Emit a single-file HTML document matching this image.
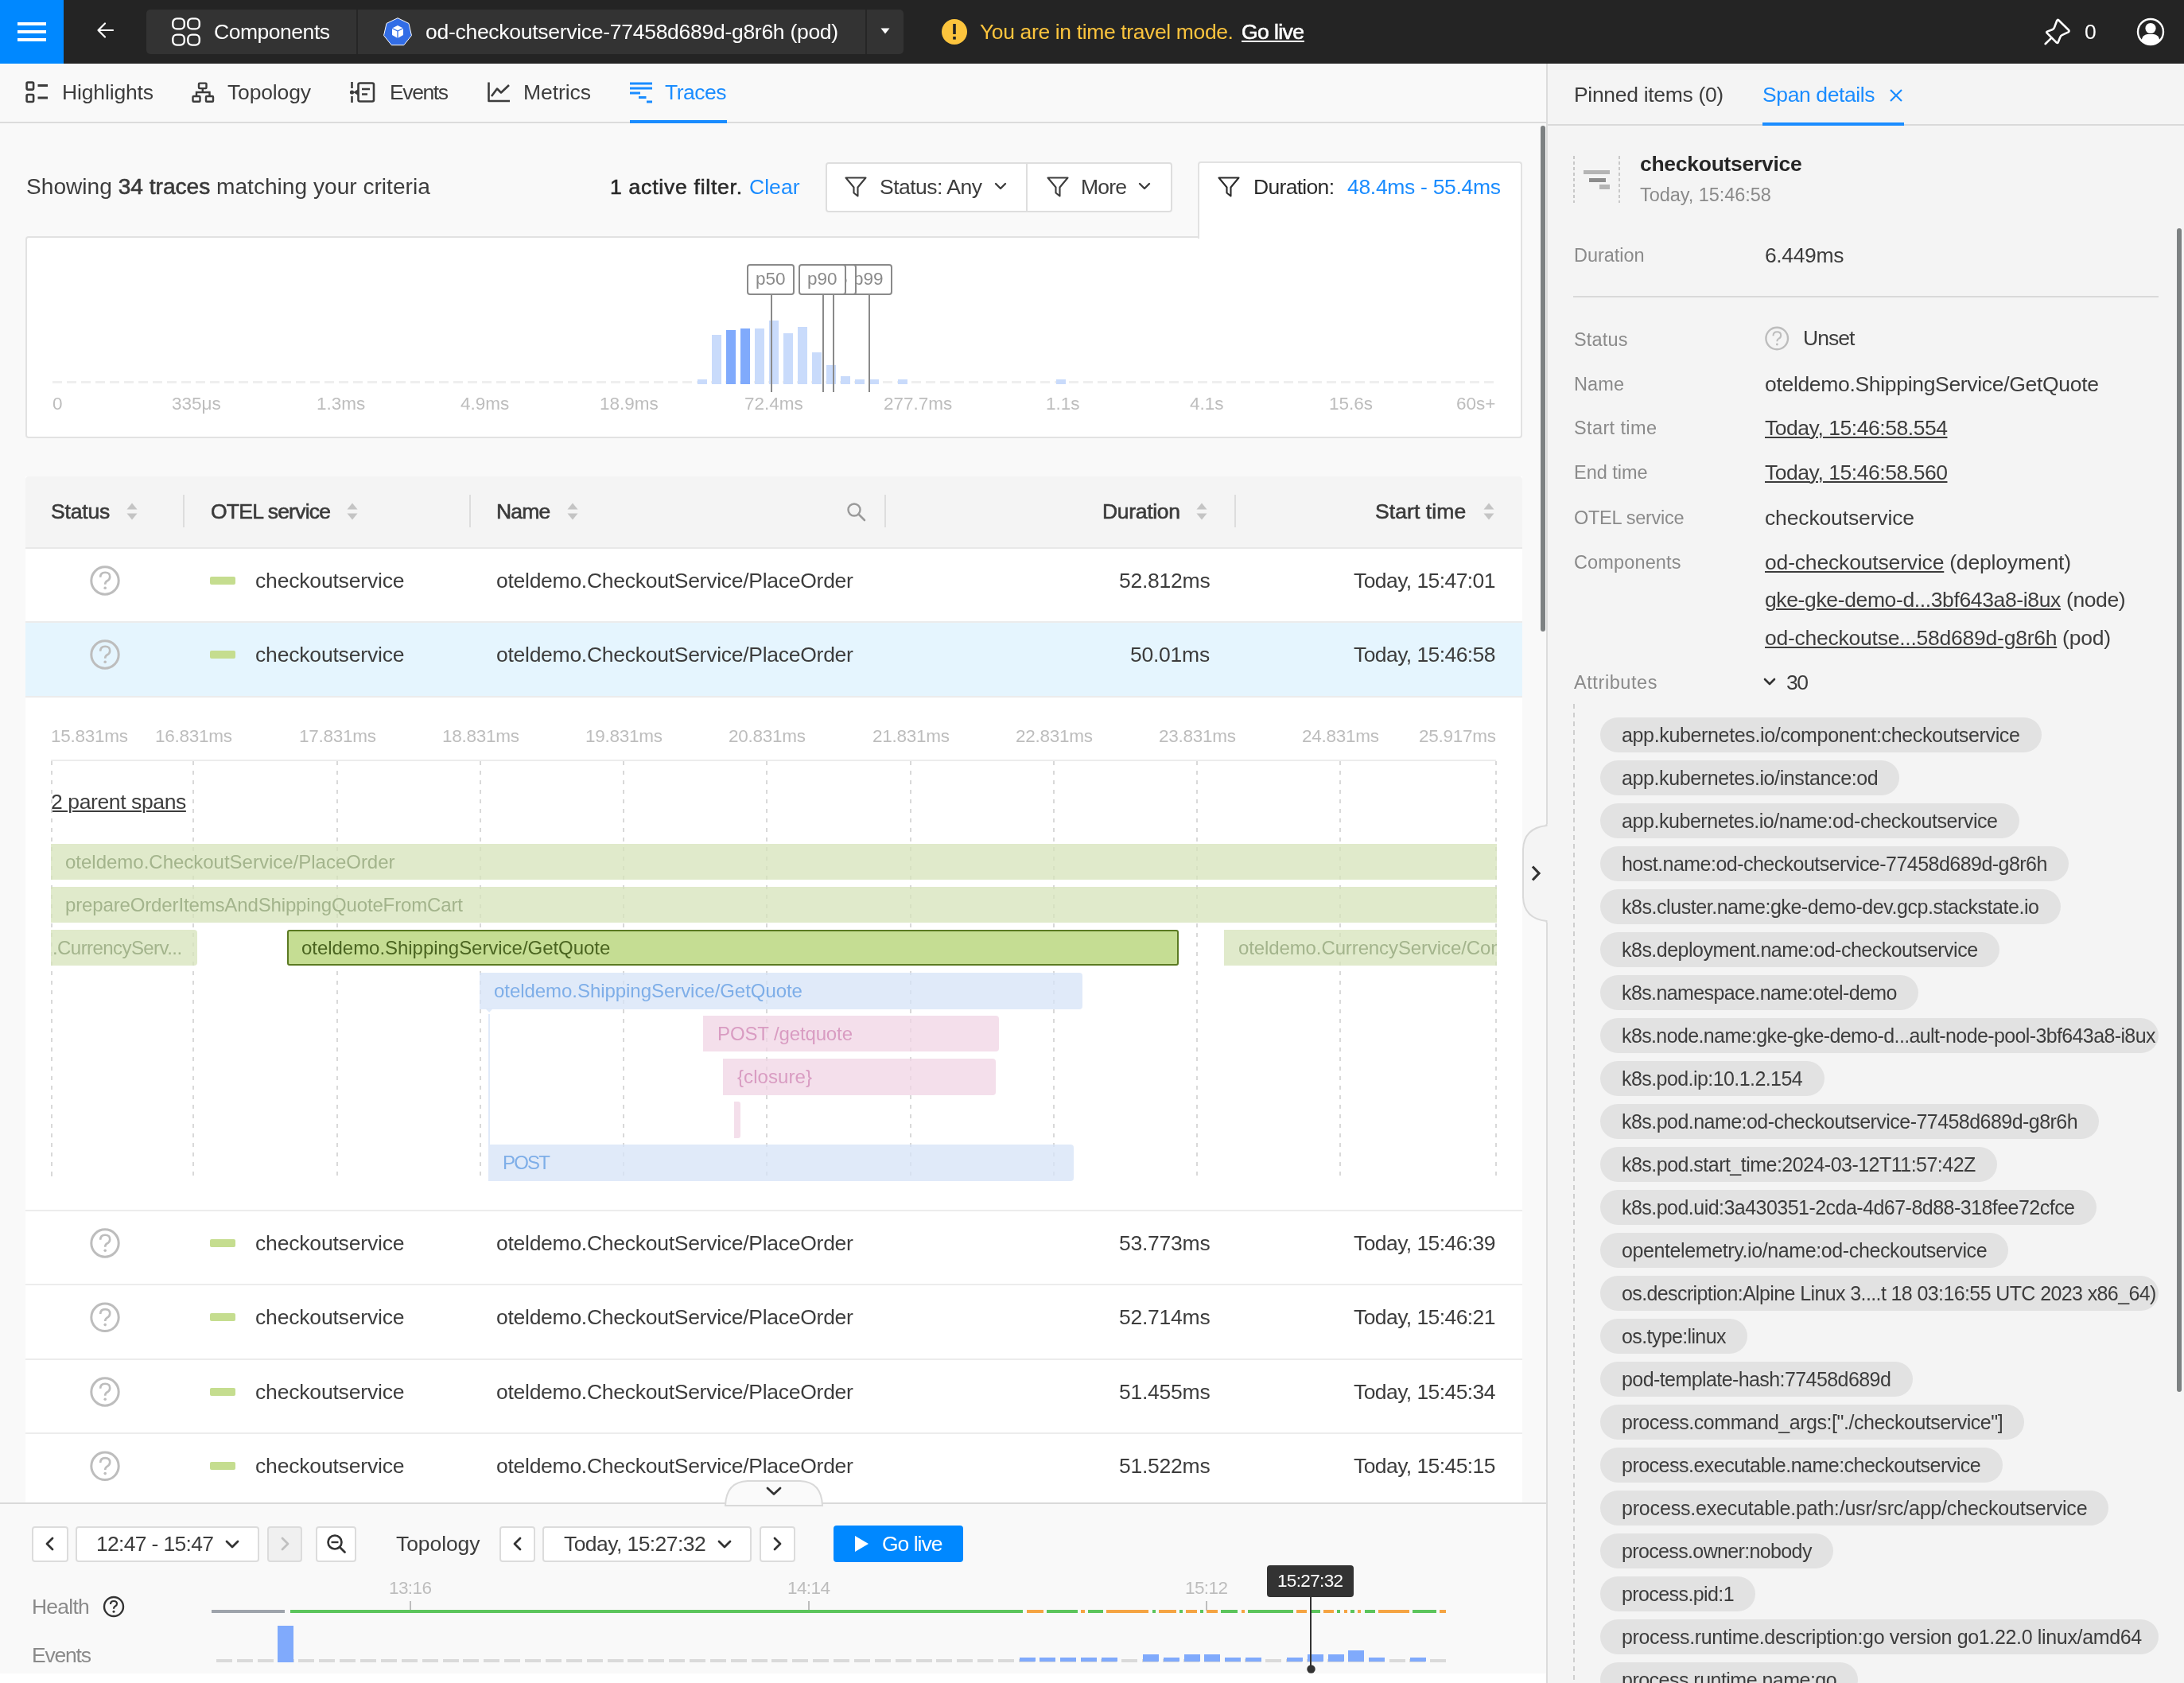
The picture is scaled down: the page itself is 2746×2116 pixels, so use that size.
<!DOCTYPE html><html><head><meta charset="utf-8"><title>Traces</title><style>
html,body{margin:0;padding:0;}
body{width:2746px;height:2116px;position:relative;overflow:hidden;background:#f9f9f9;font-family:"Liberation Sans",sans-serif;}
.a{position:absolute;}
.t{position:absolute;white-space:pre;will-change:transform;}
svg.a{overflow:visible;}
</style></head><body>
<div class="a" style="left:0.0px;top:0.0px;width:2746.0px;height:80.0px;background:#242424;"></div>
<div class="a" style="left:0.0px;top:0.0px;width:80.0px;height:80.0px;background:#0088ff;"></div>
<div class="a" style="left:22.0px;top:28.0px;width:36.0px;height:4.0px;background:#ffffff;"></div>
<div class="a" style="left:22.0px;top:38.0px;width:36.0px;height:4.0px;background:#ffffff;"></div>
<div class="a" style="left:22.0px;top:48.0px;width:36.0px;height:4.0px;background:#ffffff;"></div>
<svg class="a" style="left:118px;top:24px;" width="30" height="30" viewBox="0 0 30 30"><path d="M24 14 H6 M14 5.5 L5.5 14 L14 22.5" fill="none" stroke="#fff" stroke-width="2.2" stroke-linecap="round" stroke-linejoin="round"/></svg>
<div class="a" style="left:184.0px;top:12.0px;width:952.0px;height:56.0px;background:#333333;border-radius:5px;"></div>
<div class="a" style="left:448.0px;top:12.0px;width:2.0px;height:56.0px;background:#262626;"></div>
<div class="a" style="left:1088.0px;top:12.0px;width:2.0px;height:56.0px;background:#262626;"></div>
<svg class="a" style="left:214px;top:20px;" width="40" height="40" viewBox="0 0 40 40"><rect x="3.3" y="3.4" width="14.5" height="13" rx="5" fill="none" stroke="#fff" stroke-width="2.4"/><rect x="3.3" y="23.6" width="14.5" height="13" rx="5" fill="none" stroke="#fff" stroke-width="2.4"/><rect x="22.3" y="3.4" width="14.5" height="13" rx="5" fill="none" stroke="#fff" stroke-width="2.4"/><rect x="22.3" y="23.6" width="14.5" height="13" rx="5" fill="none" stroke="#fff" stroke-width="2.4"/></svg>
<div class="t" style="left:269.0px;top:20.0px;font-size:26.5px;line-height:40px;color:#ffffff;letter-spacing:-0.47px;">Components</div>
<svg class="a" style="left:480px;top:20px;" width="40" height="40" viewBox="0 0 40 40"><polygon points="20.00,2.70 33.99,9.44 37.45,24.58 27.77,36.73 12.23,36.73 2.55,24.58 6.01,9.44" fill="#326de6" stroke="#fff" stroke-width="1"/><path d="M20 12 L27 15.5 L27 24 L20 28 L13 24 L13 15.5 Z" fill="#fff"/><path d="M13 15.5 L20 19 L27 15.5 M20 19 V28" fill="none" stroke="#326de6" stroke-width="1.3"/></svg>
<div class="t" style="left:535.0px;top:20.0px;font-size:26.5px;line-height:40px;color:#ffffff;letter-spacing:-0.28px;">od-checkoutservice-77458d689d-g8r6h (pod)</div>
<svg class="a" style="left:1104px;top:34px;" width="18" height="10" viewBox="0 0 18 10"><path d="M3.5 1.5 H14.5 L9 8.5 Z" fill="#fff"/></svg>
<svg class="a" style="left:1183px;top:23px;" width="34" height="34" viewBox="0 0 34 34"><circle cx="17" cy="17" r="16" fill="#fcc43d"/><rect x="15.2" y="7" width="3.6" height="13" fill="#242424"/><rect x="15.2" y="23" width="3.6" height="3.6" fill="#242424"/></svg>
<div class="t" style="left:1232.0px;top:20.0px;font-size:26.5px;line-height:40px;color:#fcc43d;letter-spacing:-0.37px;">You are in time travel mode.</div>
<div class="t" style="left:1561.0px;top:20.0px;font-size:26.5px;line-height:40px;color:#ffffff;-webkit-text-stroke:0.6px #ffffff;letter-spacing:-0.58px;">Go live</div>
<div class="a" style="left:1561.0px;top:51.0px;width:79.0px;height:1.6px;background:#ffffff;"></div>
<svg class="a" style="left:2566px;top:20px;" width="40" height="40" viewBox="0 0 40 40"><g fill="none" stroke="#fff" stroke-width="2.6" stroke-linejoin="round" stroke-linecap="round"><path d="M22.2 5.2 L35.2 18 Q36.2 19.4 34.6 20.4 L26.6 24.2 Q25 25 24.4 26.6 L21.6 33.4 Q21 34.6 19.8 33.6 L7.6 21.4 Q6.6 20.2 8 19.6 L14.4 17.2 Q16.2 16.6 16.9 14.8 L20.2 6 Q21 4.2 22.2 5.2 Z"/><path d="M13.4 27.6 L5.6 35.2"/></g></svg>
<div class="t" style="left:2621.0px;top:20.0px;font-size:26.5px;line-height:40px;color:#ffffff;">0</div>
<svg class="a" style="left:2686px;top:22px;" width="36" height="36" viewBox="0 0 36 36"><circle cx="18" cy="18" r="16" fill="none" stroke="#fff" stroke-width="2.4"/><circle cx="18" cy="13.5" r="6.6" fill="#fff"/><path d="M6.5 28.5 Q8 21.5 14 21 L22 21 Q28 21.5 29.5 28.5 Q24.5 33.5 18 33.5 Q11.5 33.5 6.5 28.5 Z" fill="#fff"/></svg>
<div class="a" style="left:0.0px;top:153.0px;width:1944.0px;height:2.0px;background:#dcdcdc;"></div>
<svg class="a" style="left:30px;top:100px;" width="34" height="32" viewBox="0 0 34 32"><g fill="none" stroke="#3c3c3c" stroke-width="2.6"><rect x="3.6" y="3.6" width="8.5" height="9" rx="1.5"/><rect x="3.6" y="19" width="8.5" height="9" rx="1.5"/></g><rect x="17.5" y="6" width="12.5" height="3" fill="#3c3c3c"/><rect x="17.5" y="21.5" width="12.5" height="3" fill="#3c3c3c"/></svg>
<div class="t" style="left:77.5px;top:95.5px;font-size:26.5px;line-height:40px;color:#3c3c3c;letter-spacing:-0.15px;">Highlights</div>
<svg class="a" style="left:240px;top:100px;" width="32" height="32" viewBox="0 0 32 32"><g fill="none" stroke="#3c3c3c" stroke-width="2.4"><rect x="10" y="4.6" width="9.5" height="6.5" rx="1"/><rect x="2.5" y="21" width="9" height="6.8" rx="1"/><rect x="19" y="21" width="9" height="6.8" rx="1"/><path d="M14.8 11 V16 M7 21 V16 H23.5 V21"/></g></svg>
<div class="t" style="left:286.0px;top:95.5px;font-size:26.5px;line-height:40px;color:#3c3c3c;letter-spacing:-0.15px;">Topology</div>
<svg class="a" style="left:438px;top:100px;" width="36" height="32" viewBox="0 0 36 32"><g fill="none" stroke="#3c3c3c" stroke-width="2.6"><rect x="12.5" y="4.5" width="19.5" height="23" rx="2"/><path d="M4.5 3 V11 M4.5 21 V29"/><path d="M17 12 H27 M17 18.5 H24"/></g><circle cx="4.5" cy="16" r="2.6" fill="#3c3c3c"/><path d="M6 16 L12.5 12 V20 Z" fill="#3c3c3c"/></svg>
<div class="t" style="left:489.7px;top:95.5px;font-size:26.5px;line-height:40px;color:#3c3c3c;letter-spacing:-1.40px;">Events</div>
<svg class="a" style="left:611px;top:100px;" width="32" height="32" viewBox="0 0 32 32"><g fill="none" stroke="#3c3c3c" stroke-width="2.6" stroke-linejoin="round"><path d="M3.5 3.5 V27 H30"/><path d="M7 21 L14 11.5 L19 16.5 L29 7"/></g></svg>
<div class="t" style="left:658.0px;top:95.5px;font-size:26.5px;line-height:40px;color:#3c3c3c;letter-spacing:-0.07px;">Metrics</div>
<svg class="a" style="left:790px;top:100px;" width="32" height="32" viewBox="0 0 32 32"><g fill="#1a8cff"><rect x="2" y="3.5" width="28" height="3"/><rect x="2" y="9.5" width="28" height="3"/><rect x="2" y="15.5" width="13" height="3"/><rect x="13" y="21" width="9.5" height="3"/><rect x="23" y="26.5" width="7" height="3"/></g></svg>
<div class="t" style="left:836.0px;top:95.5px;font-size:26.5px;line-height:40px;color:#1a8cff;letter-spacing:-0.50px;">Traces</div>
<div class="a" style="left:792.0px;top:151.0px;width:122.0px;height:4.0px;background:#1a8cff;"></div>
<div class="t" style="left:33px;top:215px;font-size:28.12px;line-height:40px;color:#3c3c3c;">Showing <span style="-webkit-text-stroke:0.6px #3a3a3a;color:#3a3a3a">34 traces</span> matching your criteria</div>
<div class="t" style="left:767.0px;top:215.0px;font-size:26.5px;line-height:40px;color:#2a2a2a;-webkit-text-stroke:0.6px #2a2a2a;letter-spacing:0.76px;">1 active filter.</div>
<div class="t" style="left:941.5px;top:215.0px;font-size:26.5px;line-height:40px;color:#1a8cff;letter-spacing:0.04px;">Clear</div>
<div class="a" style="left:1038.0px;top:203.5px;width:436.0px;height:63.0px;background:#ffffff;box-sizing:border-box;border:2px solid #dedede;border-radius:4px;"></div>
<div class="a" style="left:1290.0px;top:205.0px;width:2.0px;height:60.0px;background:#dedede;"></div>
<svg class="a" style="left:1061px;top:220px;" width="30" height="30" viewBox="0 0 30 30"><path d="M2.5 3.5 H27.5 L17.5 15.5 V26.5 L12.5 22.5 V15.5 Z" fill="none" stroke="#3c3c3c" stroke-width="2.1" stroke-linejoin="round"/></svg>
<div class="t" style="left:1106.0px;top:215.0px;font-size:26.5px;line-height:40px;color:#3c3c3c;letter-spacing:-0.51px;">Status: Any</div>
<svg class="a" style="left:1249.5px;top:228.5px;" width="16" height="12" viewBox="0 0 16 12"><path d="M2 2 L8.0 8 L14 2" fill="none" stroke="#3c3c3c" stroke-width="2.4" stroke-linecap="round" stroke-linejoin="round"/></svg>
<svg class="a" style="left:1315px;top:220px;" width="30" height="30" viewBox="0 0 30 30"><path d="M2.5 3.5 H27.5 L17.5 15.5 V26.5 L12.5 22.5 V15.5 Z" fill="none" stroke="#3c3c3c" stroke-width="2.1" stroke-linejoin="round"/></svg>
<div class="t" style="left:1359.0px;top:215.0px;font-size:26.5px;line-height:40px;color:#3c3c3c;letter-spacing:-0.79px;">More</div>
<svg class="a" style="left:1431px;top:228.5px;" width="16" height="12" viewBox="0 0 16 12"><path d="M2 2 L8.0 8 L14 2" fill="none" stroke="#3c3c3c" stroke-width="2.4" stroke-linecap="round" stroke-linejoin="round"/></svg>
<div class="a" style="left:32.0px;top:297.0px;width:1882.0px;height:254.0px;background:#ffffff;box-sizing:border-box;border:2px solid #e2e2e2;border-radius:4px;"></div>
<div class="a" style="left:1506.0px;top:203.0px;width:408.0px;height:97.0px;background:#ffffff;box-sizing:border-box;border:2px solid #e2e2e2;border-bottom:none;border-radius:4px 4px 0 0;"></div>
<div class="a" style="left:1508.0px;top:296.0px;width:404.0px;height:5.0px;background:#ffffff;"></div>
<svg class="a" style="left:1530px;top:220px;" width="30" height="30" viewBox="0 0 30 30"><path d="M2.5 3.5 H27.5 L17.5 15.5 V26.5 L12.5 22.5 V15.5 Z" fill="none" stroke="#2a2a2a" stroke-width="2.1" stroke-linejoin="round"/></svg>
<div class="t" style="left:1575.5px;top:215.0px;font-size:26.5px;line-height:40px;color:#2a2a2a;letter-spacing:-0.69px;">Duration:</div>
<div class="t" style="left:1694.0px;top:215.0px;font-size:26.5px;line-height:40px;color:#1a8cff;letter-spacing:-0.31px;">48.4ms - 55.4ms</div>
<div class="a" style="left:66px;top:479px;width:1815px;height:3px;background:repeating-linear-gradient(90deg,#efefef 0 12px,transparent 12px 18px);"></div>
<div class="a" style="left:877.0px;top:477.0px;width:12.0px;height:5.6px;background:#c9dbfb;"></div>
<div class="a" style="left:895.0px;top:421.0px;width:12.0px;height:61.6px;background:#c9dbfb;"></div>
<div class="a" style="left:913.0px;top:415.0px;width:12.0px;height:67.6px;background:#80aafc;"></div>
<div class="a" style="left:931.0px;top:413.0px;width:12.0px;height:69.6px;background:#80aafc;"></div>
<div class="a" style="left:949.0px;top:413.0px;width:12.0px;height:69.6px;background:#c9dbfb;"></div>
<div class="a" style="left:967.0px;top:403.0px;width:12.0px;height:79.6px;background:#c9dbfb;"></div>
<div class="a" style="left:985.0px;top:419.0px;width:12.0px;height:63.6px;background:#c9dbfb;"></div>
<div class="a" style="left:1003.0px;top:411.0px;width:12.0px;height:71.6px;background:#c9dbfb;"></div>
<div class="a" style="left:1021.0px;top:443.0px;width:12.0px;height:39.6px;background:#c9dbfb;"></div>
<div class="a" style="left:1039.0px;top:459.0px;width:12.0px;height:23.6px;background:#c9dbfb;"></div>
<div class="a" style="left:1057.0px;top:473.0px;width:12.0px;height:9.6px;background:#c9dbfb;"></div>
<div class="a" style="left:1075.0px;top:477.0px;width:12.0px;height:5.6px;background:#c9dbfb;"></div>
<div class="a" style="left:1093.0px;top:477.0px;width:12.0px;height:5.6px;background:#c9dbfb;"></div>
<div class="a" style="left:1129.0px;top:477.0px;width:12.0px;height:5.6px;background:#c9dbfb;"></div>
<div class="a" style="left:1327.5px;top:477.0px;width:12.0px;height:5.6px;background:#c9dbfb;"></div>
<div class="t" style="left:66.0px;top:488.0px;font-size:22.5px;line-height:40px;color:#bdbdbd;">0</div>
<div class="t" style="left:216.1px;top:488.0px;font-size:22.5px;line-height:40px;color:#bdbdbd;">335μs</div>
<div class="t" style="left:398.2px;top:488.0px;font-size:22.5px;line-height:40px;color:#bdbdbd;">1.3ms</div>
<div class="t" style="left:579.2px;top:488.0px;font-size:22.5px;line-height:40px;color:#bdbdbd;">4.9ms</div>
<div class="t" style="left:754.0px;top:488.0px;font-size:22.5px;line-height:40px;color:#bdbdbd;">18.9ms</div>
<div class="t" style="left:936.3px;top:488.0px;font-size:22.5px;line-height:40px;color:#bdbdbd;">72.4ms</div>
<div class="t" style="left:1111.2px;top:488.0px;font-size:22.5px;line-height:40px;color:#bdbdbd;">277.7ms</div>
<div class="t" style="left:1315.3px;top:488.0px;font-size:22.5px;line-height:40px;color:#bdbdbd;">1.1s</div>
<div class="t" style="left:1496.4px;top:488.0px;font-size:22.5px;line-height:40px;color:#bdbdbd;">4.1s</div>
<div class="t" style="left:1671.3px;top:488.0px;font-size:22.5px;line-height:40px;color:#bdbdbd;">15.6s</div>
<div class="t" style="left:1830.6px;top:488.0px;font-size:22.5px;line-height:40px;color:#bdbdbd;">60s+</div>
<div class="a" style="left:1062.0px;top:331.5px;width:60.0px;height:39.0px;background:#ffffff;box-sizing:border-box;border:2px solid #8a8a8a;border-radius:4px;"></div>
<div class="t" style="left:1073.2px;top:331.0px;font-size:22.5px;line-height:40px;color:#8a8a8a;">p99</div>
<div class="a" style="left:1017.0px;top:331.5px;width:60.0px;height:39.0px;background:#ffffff;box-sizing:border-box;border:2px solid #8a8a8a;border-radius:4px;"></div>
<div class="t" style="left:1028.2px;top:331.0px;font-size:22.5px;line-height:40px;color:#8a8a8a;">p95</div>
<div class="a" style="left:1003.5px;top:331.5px;width:60.0px;height:39.0px;background:#ffffff;box-sizing:border-box;border:2px solid #8a8a8a;border-radius:4px;"></div>
<div class="t" style="left:1014.7px;top:331.0px;font-size:22.5px;line-height:40px;color:#8a8a8a;">p90</div>
<div class="a" style="left:938.5px;top:331.5px;width:60.0px;height:39.0px;background:#ffffff;box-sizing:border-box;border:2px solid #8a8a8a;border-radius:4px;"></div>
<div class="t" style="left:949.7px;top:331.0px;font-size:22.5px;line-height:40px;color:#8a8a8a;">p50</div>
<div class="a" style="left:1091.5px;top:370.5px;width:2.0px;height:122.0px;background:#8a8a8a;"></div>
<div class="a" style="left:1046.5px;top:370.5px;width:2.0px;height:122.0px;background:#8a8a8a;"></div>
<div class="a" style="left:1034.0px;top:370.5px;width:2.0px;height:122.0px;background:#8a8a8a;"></div>
<div class="a" style="left:969.0px;top:370.5px;width:2.0px;height:122.0px;background:#8a8a8a;"></div>
<div class="a" style="left:32.0px;top:599.0px;width:1882.0px;height:1290.0px;background:#ffffff;"></div>
<div class="a" style="left:32.0px;top:599.0px;width:1882.0px;height:90.0px;background:#f4f4f4;border-radius:4px 4px 0 0;"></div>
<div class="a" style="left:32.0px;top:688.0px;width:1882.0px;height:2.0px;background:#e8e8e8;"></div>
<div class="t" style="left:64.0px;top:623.0px;font-size:26.5px;line-height:40px;color:#3a3a3a;-webkit-text-stroke:0.6px #3a3a3a;letter-spacing:-0.17px;">Status</div>
<svg class="a" style="left:158px;top:630px;" width="17" height="26" viewBox="0 0 17 26"><path d="M1.5 10.5 L8 2.5 L14.5 10.5 Z M1.5 15.5 L8 23.5 L14.5 15.5 Z" fill="#c4c4c4"/></svg>
<div class="a" style="left:230.0px;top:622.0px;width:2.0px;height:41.0px;background:#dddddd;"></div>
<div class="t" style="left:264.6px;top:623.0px;font-size:26.5px;line-height:40px;color:#3a3a3a;-webkit-text-stroke:0.6px #3a3a3a;letter-spacing:-0.78px;">OTEL service</div>
<svg class="a" style="left:435px;top:630px;" width="17" height="26" viewBox="0 0 17 26"><path d="M1.5 10.5 L8 2.5 L14.5 10.5 Z M1.5 15.5 L8 23.5 L14.5 15.5 Z" fill="#c4c4c4"/></svg>
<div class="a" style="left:590.0px;top:622.0px;width:2.0px;height:41.0px;background:#dddddd;"></div>
<div class="t" style="left:624.0px;top:623.0px;font-size:26.5px;line-height:40px;color:#3a3a3a;-webkit-text-stroke:0.6px #3a3a3a;letter-spacing:-0.80px;">Name</div>
<svg class="a" style="left:712px;top:630px;" width="17" height="26" viewBox="0 0 17 26"><path d="M1.5 10.5 L8 2.5 L14.5 10.5 Z M1.5 15.5 L8 23.5 L14.5 15.5 Z" fill="#c4c4c4"/></svg>
<svg class="a" style="left:1064px;top:631px;" width="26" height="26" viewBox="0 0 26 26"><circle cx="10" cy="10" r="7.5" fill="none" stroke="#9a9a9a" stroke-width="2.4"/><path d="M15.5 15.5 L23 23" stroke="#9a9a9a" stroke-width="2.6" stroke-linecap="round"/></svg>
<div class="a" style="left:1112.0px;top:622.0px;width:2.0px;height:41.0px;background:#dddddd;"></div>
<div class="t" style="left:1385.5px;top:623.0px;font-size:26.5px;line-height:40px;color:#3a3a3a;-webkit-text-stroke:0.6px #3a3a3a;letter-spacing:-0.31px;">Duration</div>
<svg class="a" style="left:1502.5px;top:630px;" width="17" height="26" viewBox="0 0 17 26"><path d="M1.5 10.5 L8 2.5 L14.5 10.5 Z M1.5 15.5 L8 23.5 L14.5 15.5 Z" fill="#c4c4c4"/></svg>
<div class="a" style="left:1551.5px;top:622.0px;width:2.0px;height:41.0px;background:#dddddd;"></div>
<div class="t" style="left:1728.8px;top:623.0px;font-size:26.5px;line-height:40px;color:#3a3a3a;-webkit-text-stroke:0.6px #3a3a3a;letter-spacing:0.09px;">Start time</div>
<svg class="a" style="left:1863.5px;top:630px;" width="17" height="26" viewBox="0 0 17 26"><path d="M1.5 10.5 L8 2.5 L14.5 10.5 Z M1.5 15.5 L8 23.5 L14.5 15.5 Z" fill="#c4c4c4"/></svg>
<svg class="a" style="left:110px;top:708px;" width="44" height="44" viewBox="0 0 44 44"><g transform="translate(22 22) scale(1.000)"><circle cx="0" cy="0" r="17.2" fill="none" stroke="#bdbdbd" stroke-width="3"/><path d="M-5.8 -4.2 Q-5.8 -10.2 0.2 -10.2 Q6.2 -10.2 6.2 -4.8 Q6.2 -1.5 2.5 0.5 Q0.2 1.8 0.2 4.8" fill="none" stroke="#bdbdbd" stroke-width="2.6"/><circle cx="0.2" cy="9.3" r="1.8" fill="#bdbdbd"/></g></svg>
<div class="a" style="left:264.0px;top:725.0px;width:32.0px;height:10.0px;background:#c5dd8f;border-radius:2px;"></div>
<div class="t" style="left:320.5px;top:710.0px;font-size:26.5px;line-height:40px;color:#3c3c3c;letter-spacing:-0.18px;">checkoutservice</div>
<div class="t" style="left:624.0px;top:710.0px;font-size:26.5px;line-height:40px;color:#3c3c3c;letter-spacing:-0.27px;">oteldemo.CheckoutService/PlaceOrder</div>
<div class="t" style="left:1406.7px;top:710.0px;font-size:26.5px;line-height:40px;color:#3c3c3c;letter-spacing:-0.25px;">52.812ms</div>
<div class="t" style="left:1702.0px;top:710.0px;font-size:26.5px;line-height:40px;color:#3c3c3c;letter-spacing:-0.58px;">Today, 15:47:01</div>
<div class="a" style="left:32.0px;top:781.0px;width:1882.0px;height:2.0px;background:#ececec;"></div>
<div class="a" style="left:32.0px;top:783.0px;width:1882.0px;height:92.0px;background:#e5f5fe;"></div>
<svg class="a" style="left:110px;top:801px;" width="44" height="44" viewBox="0 0 44 44"><g transform="translate(22 22) scale(1.000)"><circle cx="0" cy="0" r="17.2" fill="none" stroke="#bdbdbd" stroke-width="3"/><path d="M-5.8 -4.2 Q-5.8 -10.2 0.2 -10.2 Q6.2 -10.2 6.2 -4.8 Q6.2 -1.5 2.5 0.5 Q0.2 1.8 0.2 4.8" fill="none" stroke="#bdbdbd" stroke-width="2.6"/><circle cx="0.2" cy="9.3" r="1.8" fill="#bdbdbd"/></g></svg>
<div class="a" style="left:264.0px;top:818.0px;width:32.0px;height:10.0px;background:#c5dd8f;border-radius:2px;"></div>
<div class="t" style="left:320.5px;top:803.0px;font-size:26.5px;line-height:40px;color:#3c3c3c;letter-spacing:-0.18px;">checkoutservice</div>
<div class="t" style="left:624.0px;top:803.0px;font-size:26.5px;line-height:40px;color:#3c3c3c;letter-spacing:-0.27px;">oteldemo.CheckoutService/PlaceOrder</div>
<div class="t" style="left:1421.2px;top:803.0px;font-size:26.5px;line-height:40px;color:#3c3c3c;letter-spacing:-0.25px;">50.01ms</div>
<div class="t" style="left:1702.0px;top:803.0px;font-size:26.5px;line-height:40px;color:#3c3c3c;letter-spacing:-0.58px;">Today, 15:46:58</div>
<div class="a" style="left:32.0px;top:875.0px;width:1882.0px;height:2.0px;background:#ececec;"></div>
<div class="a" style="left:32.0px;top:1521.0px;width:1882.0px;height:2.0px;background:#ececec;"></div>
<svg class="a" style="left:110px;top:1541px;" width="44" height="44" viewBox="0 0 44 44"><g transform="translate(22 22) scale(1.000)"><circle cx="0" cy="0" r="17.2" fill="none" stroke="#bdbdbd" stroke-width="3"/><path d="M-5.8 -4.2 Q-5.8 -10.2 0.2 -10.2 Q6.2 -10.2 6.2 -4.8 Q6.2 -1.5 2.5 0.5 Q0.2 1.8 0.2 4.8" fill="none" stroke="#bdbdbd" stroke-width="2.6"/><circle cx="0.2" cy="9.3" r="1.8" fill="#bdbdbd"/></g></svg>
<div class="a" style="left:264.0px;top:1558.0px;width:32.0px;height:10.0px;background:#c5dd8f;border-radius:2px;"></div>
<div class="t" style="left:320.5px;top:1543.0px;font-size:26.5px;line-height:40px;color:#3c3c3c;letter-spacing:-0.18px;">checkoutservice</div>
<div class="t" style="left:624.0px;top:1543.0px;font-size:26.5px;line-height:40px;color:#3c3c3c;letter-spacing:-0.27px;">oteldemo.CheckoutService/PlaceOrder</div>
<div class="t" style="left:1406.7px;top:1543.0px;font-size:26.5px;line-height:40px;color:#3c3c3c;letter-spacing:-0.25px;">53.773ms</div>
<div class="t" style="left:1702.0px;top:1543.0px;font-size:26.5px;line-height:40px;color:#3c3c3c;letter-spacing:-0.58px;">Today, 15:46:39</div>
<div class="a" style="left:32.0px;top:1614.0px;width:1882.0px;height:2.0px;background:#ececec;"></div>
<svg class="a" style="left:110px;top:1634px;" width="44" height="44" viewBox="0 0 44 44"><g transform="translate(22 22.299999999999955) scale(1.000)"><circle cx="0" cy="0" r="17.2" fill="none" stroke="#bdbdbd" stroke-width="3"/><path d="M-5.8 -4.2 Q-5.8 -10.2 0.2 -10.2 Q6.2 -10.2 6.2 -4.8 Q6.2 -1.5 2.5 0.5 Q0.2 1.8 0.2 4.8" fill="none" stroke="#bdbdbd" stroke-width="2.6"/><circle cx="0.2" cy="9.3" r="1.8" fill="#bdbdbd"/></g></svg>
<div class="a" style="left:264.0px;top:1651.3px;width:32.0px;height:10.0px;background:#c5dd8f;border-radius:2px;"></div>
<div class="t" style="left:320.5px;top:1636.3px;font-size:26.5px;line-height:40px;color:#3c3c3c;letter-spacing:-0.18px;">checkoutservice</div>
<div class="t" style="left:624.0px;top:1636.3px;font-size:26.5px;line-height:40px;color:#3c3c3c;letter-spacing:-0.27px;">oteldemo.CheckoutService/PlaceOrder</div>
<div class="t" style="left:1406.7px;top:1636.3px;font-size:26.5px;line-height:40px;color:#3c3c3c;letter-spacing:-0.25px;">52.714ms</div>
<div class="t" style="left:1702.0px;top:1636.3px;font-size:26.5px;line-height:40px;color:#3c3c3c;letter-spacing:-0.58px;">Today, 15:46:21</div>
<div class="a" style="left:32.0px;top:1707.5px;width:1882.0px;height:2.0px;background:#ececec;"></div>
<svg class="a" style="left:110px;top:1728px;" width="44" height="44" viewBox="0 0 44 44"><g transform="translate(22 22) scale(1.000)"><circle cx="0" cy="0" r="17.2" fill="none" stroke="#bdbdbd" stroke-width="3"/><path d="M-5.8 -4.2 Q-5.8 -10.2 0.2 -10.2 Q6.2 -10.2 6.2 -4.8 Q6.2 -1.5 2.5 0.5 Q0.2 1.8 0.2 4.8" fill="none" stroke="#bdbdbd" stroke-width="2.6"/><circle cx="0.2" cy="9.3" r="1.8" fill="#bdbdbd"/></g></svg>
<div class="a" style="left:264.0px;top:1745.0px;width:32.0px;height:10.0px;background:#c5dd8f;border-radius:2px;"></div>
<div class="t" style="left:320.5px;top:1730.0px;font-size:26.5px;line-height:40px;color:#3c3c3c;letter-spacing:-0.18px;">checkoutservice</div>
<div class="t" style="left:624.0px;top:1730.0px;font-size:26.5px;line-height:40px;color:#3c3c3c;letter-spacing:-0.27px;">oteldemo.CheckoutService/PlaceOrder</div>
<div class="t" style="left:1406.7px;top:1730.0px;font-size:26.5px;line-height:40px;color:#3c3c3c;letter-spacing:-0.25px;">51.455ms</div>
<div class="t" style="left:1702.0px;top:1730.0px;font-size:26.5px;line-height:40px;color:#3c3c3c;letter-spacing:-0.58px;">Today, 15:45:34</div>
<div class="a" style="left:32.0px;top:1801.0px;width:1882.0px;height:2.0px;background:#ececec;"></div>
<svg class="a" style="left:110px;top:1821px;" width="44" height="44" viewBox="0 0 44 44"><g transform="translate(22 22.299999999999955) scale(1.000)"><circle cx="0" cy="0" r="17.2" fill="none" stroke="#bdbdbd" stroke-width="3"/><path d="M-5.8 -4.2 Q-5.8 -10.2 0.2 -10.2 Q6.2 -10.2 6.2 -4.8 Q6.2 -1.5 2.5 0.5 Q0.2 1.8 0.2 4.8" fill="none" stroke="#bdbdbd" stroke-width="2.6"/><circle cx="0.2" cy="9.3" r="1.8" fill="#bdbdbd"/></g></svg>
<div class="a" style="left:264.0px;top:1838.3px;width:32.0px;height:10.0px;background:#c5dd8f;border-radius:2px;"></div>
<div class="t" style="left:320.5px;top:1823.3px;font-size:26.5px;line-height:40px;color:#3c3c3c;letter-spacing:-0.18px;">checkoutservice</div>
<div class="t" style="left:624.0px;top:1823.3px;font-size:26.5px;line-height:40px;color:#3c3c3c;letter-spacing:-0.27px;">oteldemo.CheckoutService/PlaceOrder</div>
<div class="t" style="left:1406.7px;top:1823.3px;font-size:26.5px;line-height:40px;color:#3c3c3c;letter-spacing:-0.25px;">51.522ms</div>
<div class="t" style="left:1702.0px;top:1823.3px;font-size:26.5px;line-height:40px;color:#3c3c3c;letter-spacing:-0.58px;">Today, 15:45:15</div>
<div class="a" style="left:64.0px;top:955.0px;width:1817.0px;height:2.0px;background:#ececec;"></div>
<div class="t" style="left:64.4px;top:906.0px;font-size:22.5px;line-height:40px;color:#bdbdbd;letter-spacing:-0.26px;">15.831ms</div>
<div class="t" style="left:194.5px;top:906.0px;font-size:22.5px;line-height:40px;color:#bdbdbd;letter-spacing:-0.26px;">16.831ms</div>
<div class="t" style="left:375.5px;top:906.0px;font-size:22.5px;line-height:40px;color:#bdbdbd;letter-spacing:-0.26px;">17.831ms</div>
<div class="t" style="left:555.5px;top:906.0px;font-size:22.5px;line-height:40px;color:#bdbdbd;letter-spacing:-0.26px;">18.831ms</div>
<div class="t" style="left:735.5px;top:906.0px;font-size:22.5px;line-height:40px;color:#bdbdbd;letter-spacing:-0.26px;">19.831ms</div>
<div class="t" style="left:915.5px;top:906.0px;font-size:22.5px;line-height:40px;color:#bdbdbd;letter-spacing:-0.26px;">20.831ms</div>
<div class="t" style="left:1096.5px;top:906.0px;font-size:22.5px;line-height:40px;color:#bdbdbd;letter-spacing:-0.26px;">21.831ms</div>
<div class="t" style="left:1276.5px;top:906.0px;font-size:22.5px;line-height:40px;color:#bdbdbd;letter-spacing:-0.26px;">22.831ms</div>
<div class="t" style="left:1456.5px;top:906.0px;font-size:22.5px;line-height:40px;color:#bdbdbd;letter-spacing:-0.26px;">23.831ms</div>
<div class="t" style="left:1636.5px;top:906.0px;font-size:22.5px;line-height:40px;color:#bdbdbd;letter-spacing:-0.26px;">24.831ms</div>
<div class="t" style="left:1784.0px;top:906.0px;font-size:22.5px;line-height:40px;color:#bdbdbd;letter-spacing:-0.26px;">25.917ms</div>
<div class="t" style="left:64.4px;top:988.0px;font-size:26.5px;line-height:40px;color:#3c3c3c;letter-spacing:-0.39px;text-decoration:underline;text-underline-offset:1.5px;text-decoration-thickness:1.6px;">2 parent spans</div>
<div class="a" style="left:63.5px;top:957px;width:2px;height:528px;background:repeating-linear-gradient(180deg,#d9d9d9 0 5.5px,transparent 5.5px 12px);"></div>
<div class="a" style="left:242.0px;top:957px;width:2px;height:528px;background:repeating-linear-gradient(180deg,#d9d9d9 0 5.5px,transparent 5.5px 12px);"></div>
<div class="a" style="left:423.0px;top:957px;width:2px;height:528px;background:repeating-linear-gradient(180deg,#d9d9d9 0 5.5px,transparent 5.5px 12px);"></div>
<div class="a" style="left:603.0px;top:957px;width:2px;height:528px;background:repeating-linear-gradient(180deg,#d9d9d9 0 5.5px,transparent 5.5px 12px);"></div>
<div class="a" style="left:783.0px;top:957px;width:2px;height:528px;background:repeating-linear-gradient(180deg,#d9d9d9 0 5.5px,transparent 5.5px 12px);"></div>
<div class="a" style="left:963.0px;top:957px;width:2px;height:528px;background:repeating-linear-gradient(180deg,#d9d9d9 0 5.5px,transparent 5.5px 12px);"></div>
<div class="a" style="left:1144.0px;top:957px;width:2px;height:528px;background:repeating-linear-gradient(180deg,#d9d9d9 0 5.5px,transparent 5.5px 12px);"></div>
<div class="a" style="left:1324.0px;top:957px;width:2px;height:528px;background:repeating-linear-gradient(180deg,#d9d9d9 0 5.5px,transparent 5.5px 12px);"></div>
<div class="a" style="left:1504.0px;top:957px;width:2px;height:528px;background:repeating-linear-gradient(180deg,#d9d9d9 0 5.5px,transparent 5.5px 12px);"></div>
<div class="a" style="left:1684.0px;top:957px;width:2px;height:528px;background:repeating-linear-gradient(180deg,#d9d9d9 0 5.5px,transparent 5.5px 12px);"></div>
<div class="a" style="left:1879.5px;top:957px;width:2px;height:528px;background:repeating-linear-gradient(180deg,#d9d9d9 0 5.5px,transparent 5.5px 12px);"></div>
<div class="a" style="left:64.0px;top:1061.3px;width:1817.7px;height:44.9px;background:rgba(213,227,185,0.75);border-radius:0;"></div>
<div class="a" style="left:64.0px;top:1061.3px;width:1817.7px;height:44.9px;overflow:hidden;">
<div class="t" style="left:18.4px;top:2.5px;font-size:24px;line-height:40px;color:#a3b48c;letter-spacing:-0.01px;">oteldemo.CheckoutService/PlaceOrder</div>
</div>
<div class="a" style="left:64.0px;top:1115.3px;width:1817.7px;height:44.9px;background:rgba(213,227,185,0.75);border-radius:0;"></div>
<div class="a" style="left:64.0px;top:1115.3px;width:1817.7px;height:44.9px;overflow:hidden;">
<div class="t" style="left:17.5px;top:2.5px;font-size:24px;line-height:40px;color:#a3b48c;letter-spacing:-0.14px;">prepareOrderItemsAndShippingQuoteFromCart</div>
</div>
<div class="a" style="left:64.0px;top:1169.4px;width:183.7px;height:44.9px;background:rgba(213,227,185,0.75);border-radius:0 4px 4px 0;"></div>
<div class="a" style="left:64.0px;top:1169.4px;width:183.7px;height:44.9px;overflow:hidden;">
<div class="t" style="left:2.0px;top:2.4px;font-size:24px;line-height:40px;color:#a3b48c;letter-spacing:-0.57px;">.CurrencyServ...</div>
</div>
<div class="a" style="left:1539.0px;top:1169.4px;width:342.7px;height:44.9px;background:rgba(213,227,185,0.75);border-radius:0;"></div>
<div class="a" style="left:1539.0px;top:1169.4px;width:342.7px;height:44.9px;overflow:hidden;">
<div class="t" style="left:18.0px;top:2.4px;font-size:24px;line-height:40px;color:#a3b48c;letter-spacing:-0.11px;">oteldemo.CurrencyService/Convert</div>
</div>
<div class="a" style="left:603.3px;top:1223.3px;width:757.4px;height:45.3px;background:rgba(213,227,247,0.75);border-radius:0 4px 4px 0;"></div>
<div class="a" style="left:603.3px;top:1223.3px;width:757.4px;height:45.3px;overflow:hidden;">
<div class="t" style="left:17.7px;top:2.6px;font-size:24px;line-height:40px;color:#7eaee8;letter-spacing:-0.05px;">oteldemo.ShippingService/GetQuote</div>
</div>
<div class="a" style="left:884.3px;top:1277.3px;width:372.1px;height:44.9px;background:rgba(240,212,228,0.75);border-radius:0 4px 4px 0;"></div>
<div class="a" style="left:884.3px;top:1277.3px;width:372.1px;height:44.9px;overflow:hidden;">
<div class="t" style="left:17.7px;top:2.5px;font-size:24px;line-height:40px;color:#d99cc2;letter-spacing:-0.13px;">POST /getquote</div>
</div>
<div class="a" style="left:909.0px;top:1330.9px;width:342.5px;height:45.7px;background:rgba(240,212,228,0.75);border-radius:0 4px 4px 0;"></div>
<div class="a" style="left:909.0px;top:1330.9px;width:342.5px;height:45.7px;overflow:hidden;">
<div class="t" style="left:17.8px;top:2.8px;font-size:24px;line-height:40px;color:#d99cc2;letter-spacing:0.08px;">{closure}</div>
</div>
<div class="a" style="left:922.6px;top:1385.0px;width:8.3px;height:45.6px;background:rgba(240,212,228,0.75);border-radius:0 3px 3px 0;"></div>
<div class="a" style="left:614.0px;top:1275.0px;width:2.0px;height:164.0px;background:rgba(213,227,247,0.75);"></div>
<svg class="a" style="left:608px;top:1268px;" width="14" height="6" viewBox="0 0 14 6"><path d="M2.6 0.6 L7.2 4.8 L11.3 0.6 Z" fill="rgba(213,227,247,0.75)"/></svg>
<div class="a" style="left:614.0px;top:1439.0px;width:736.4px;height:45.6px;background:rgba(213,227,247,0.75);border-radius:0 4px 4px 0;"></div>
<div class="a" style="left:614.0px;top:1439.0px;width:736.4px;height:45.6px;overflow:hidden;">
<div class="t" style="left:18.0px;top:2.8px;font-size:24px;line-height:40px;color:#7eaee8;letter-spacing:-1.78px;">POST</div>
</div>
<div class="a" style="left:361.3px;top:1169.4px;width:1121.1px;height:44.9px;background:#c5dd93;box-sizing:border-box;border:2px solid #5b7a22;border-radius:3px;"></div>
<div class="t" style="left:379.0px;top:1172.0px;font-size:24px;line-height:40px;color:#4a6420;letter-spacing:-0.04px;">oteldemo.ShippingService/GetQuote</div>
<div class="a" style="left:1937.0px;top:158.0px;width:6.0px;height:636.0px;background:#7d8182;border-radius:3px;"></div>
<div class="a" style="left:0.0px;top:1890.0px;width:1944.0px;height:214.0px;background:#f9f9f9;"></div>
<div class="a" style="left:0.0px;top:1889.0px;width:1944.0px;height:2.0px;background:#d9d9d9;"></div>
<div class="a" style="left:0.0px;top:2104.0px;width:1944.0px;height:12.0px;background:#ffffff;"></div>
<svg class="a" style="left:910px;top:1860px;" width="126" height="36" viewBox="0 0 126 36"><path d="M2 33 Q3 3 30 2 L96 2 Q123 3 124 33 Z" fill="#fafafa" stroke="#d9d9d9" stroke-width="2"/><path d="M55 11 L63 18.5 L71 11" fill="none" stroke="#333" stroke-width="2.8" stroke-linecap="round" stroke-linejoin="round"/></svg>
<div class="a" style="left:40.0px;top:1918.5px;width:45.5px;height:45.0px;background:#ffffff;box-sizing:border-box;border:2px solid #dcdcdc;border-radius:4px;"></div>
<svg class="a" style="left:52.8px;top:1930px;" width="20" height="22" viewBox="0 0 20 22"><path d="M13 4 L6 11 L13 18" fill="none" stroke="#333" stroke-width="2.8" stroke-linecap="round" stroke-linejoin="round"/></svg>
<div class="a" style="left:94.8px;top:1918.5px;width:231.2px;height:45.0px;background:#ffffff;box-sizing:border-box;border:2px solid #dcdcdc;border-radius:4px;"></div>
<div class="t" style="left:121.0px;top:1921.0px;font-size:26.5px;line-height:40px;color:#3c3c3c;letter-spacing:-0.68px;">12:47 - 15:47</div>
<svg class="a" style="left:282.8px;top:1935.5px;" width="18" height="13" viewBox="0 0 18 13"><path d="M2 2 L9.0 9 L16 2" fill="none" stroke="#333" stroke-width="2.8" stroke-linecap="round" stroke-linejoin="round"/></svg>
<div class="a" style="left:335.6px;top:1918.5px;width:44.9px;height:45.0px;background:#f0f0f0;box-sizing:border-box;border:2px solid #dcdcdc;border-radius:4px;"></div>
<svg class="a" style="left:348px;top:1930px;" width="20" height="22" viewBox="0 0 20 22"><path d="M7 4 L14 11 L7 18" fill="none" stroke="#c0c0c0" stroke-width="2.8" stroke-linecap="round" stroke-linejoin="round"/></svg>
<div class="a" style="left:397.4px;top:1918.5px;width:50.6px;height:45.0px;background:#ffffff;box-sizing:border-box;border:2px solid #dcdcdc;border-radius:4px;"></div>
<svg class="a" style="left:410px;top:1928px;" width="26" height="26" viewBox="0 0 26 26"><circle cx="11" cy="11" r="8.5" fill="none" stroke="#333" stroke-width="2.6"/><path d="M17 17 L23.5 23.5" stroke="#333" stroke-width="2.8" stroke-linecap="round"/><path d="M6.5 11 H15.5" stroke="#333" stroke-width="2.4"/></svg>
<div class="t" style="left:498.0px;top:1921.0px;font-size:26.5px;line-height:40px;color:#3c3c3c;letter-spacing:-0.08px;">Topology</div>
<div class="a" style="left:628.0px;top:1918.5px;width:45.0px;height:45.0px;background:#ffffff;box-sizing:border-box;border:2px solid #dcdcdc;border-radius:4px;"></div>
<svg class="a" style="left:640.5px;top:1930px;" width="20" height="22" viewBox="0 0 20 22"><path d="M13 4 L6 11 L13 18" fill="none" stroke="#333" stroke-width="2.8" stroke-linecap="round" stroke-linejoin="round"/></svg>
<div class="a" style="left:682.0px;top:1918.5px;width:263.0px;height:45.0px;background:#ffffff;box-sizing:border-box;border:2px solid #dcdcdc;border-radius:4px;"></div>
<div class="t" style="left:708.8px;top:1921.0px;font-size:26.5px;line-height:40px;color:#3c3c3c;letter-spacing:-0.57px;">Today, 15:27:32</div>
<svg class="a" style="left:902px;top:1935.5px;" width="18" height="13" viewBox="0 0 18 13"><path d="M2 2 L9.0 9 L16 2" fill="none" stroke="#333" stroke-width="2.8" stroke-linecap="round" stroke-linejoin="round"/></svg>
<div class="a" style="left:954.5px;top:1918.5px;width:45.0px;height:45.0px;background:#ffffff;box-sizing:border-box;border:2px solid #dcdcdc;border-radius:4px;"></div>
<svg class="a" style="left:967px;top:1930px;" width="20" height="22" viewBox="0 0 20 22"><path d="M7 4 L14 11 L7 18" fill="none" stroke="#333" stroke-width="2.8" stroke-linecap="round" stroke-linejoin="round"/></svg>
<div class="a" style="left:1048.4px;top:1918.0px;width:163.0px;height:45.5px;background:#0088ff;border-radius:4px;"></div>
<svg class="a" style="left:1072px;top:1929px;" width="22" height="24" viewBox="0 0 22 24"><path d="M3 2 L20 12 L3 22 Z" fill="#fff"/></svg>
<div class="t" style="left:1109.0px;top:1921.0px;font-size:26.5px;line-height:40px;color:#ffffff;letter-spacing:-1.00px;">Go live</div>
<div class="t" style="left:40.3px;top:1999.6px;font-size:26.5px;line-height:40px;color:#8a8a8a;letter-spacing:-0.78px;">Health</div>
<svg class="a" style="left:128px;top:2005px;" width="30" height="30" viewBox="0 0 30 30"><circle cx="15" cy="15" r="12" fill="none" stroke="#333" stroke-width="2.4"/><path d="M11 12 Q11 8 15 8 Q19 8 19 11.5 Q19 13.5 16.5 14.8 Q15 15.6 15 17.8" fill="none" stroke="#333" stroke-width="2.2"/><circle cx="15" cy="21.3" r="1.5" fill="#333"/></svg>
<div class="t" style="left:40.3px;top:2060.5px;font-size:26.5px;line-height:40px;color:#8a8a8a;letter-spacing:-1.20px;">Events</div>
<div class="t" style="left:489.0px;top:1976.8px;font-size:22.5px;line-height:40px;color:#bdbdbd;letter-spacing:-0.58px;">13:16</div>
<div class="a" style="left:515.0px;top:2012.5px;width:2.0px;height:12.5px;background:#bdbdbd;"></div>
<div class="t" style="left:989.5px;top:1976.8px;font-size:22.5px;line-height:40px;color:#bdbdbd;letter-spacing:-0.58px;">14:14</div>
<div class="a" style="left:1015.5px;top:2012.5px;width:2.0px;height:12.5px;background:#bdbdbd;"></div>
<div class="t" style="left:1489.5px;top:1976.8px;font-size:22.5px;line-height:40px;color:#bdbdbd;letter-spacing:-0.58px;">15:12</div>
<div class="a" style="left:1515.5px;top:2012.5px;width:2.0px;height:12.5px;background:#bdbdbd;"></div>
<div class="a" style="left:265.6px;top:2023.5px;width:92.9px;height:4.0px;background:#9ea3ab;"></div>
<div class="a" style="left:364.5px;top:2023.5px;width:921.5px;height:4.0px;background:#5cc55c;"></div>
<div class="a" style="left:1290.5px;top:2023.5px;width:21.3px;height:4.0px;background:#f5a443;"></div>
<div class="a" style="left:1316.0px;top:2023.5px;width:39.4px;height:4.0px;background:#5cc55c;"></div>
<div class="a" style="left:1359.2px;top:2023.5px;width:4.9px;height:4.0px;background:#f5a443;"></div>
<div class="a" style="left:1368.2px;top:2023.5px;width:19.0px;height:4.0px;background:#5cc55c;"></div>
<div class="a" style="left:1391.3px;top:2023.5px;width:53.1px;height:4.0px;background:#f5a443;"></div>
<div class="a" style="left:1448.7px;top:2023.5px;width:4.1px;height:4.0px;background:#5cc55c;"></div>
<div class="a" style="left:1457.2px;top:2023.5px;width:21.8px;height:4.0px;background:#f5a443;"></div>
<div class="a" style="left:1483.3px;top:2023.5px;width:4.1px;height:4.0px;background:#5cc55c;"></div>
<div class="a" style="left:1491.3px;top:2023.5px;width:13.6px;height:4.0px;background:#f5a443;"></div>
<div class="a" style="left:1509.0px;top:2023.5px;width:4.0px;height:4.0px;background:#5cc55c;"></div>
<div class="a" style="left:1517.0px;top:2023.5px;width:13.8px;height:4.0px;background:#f5a443;"></div>
<div class="a" style="left:1534.6px;top:2023.5px;width:21.8px;height:4.0px;background:#5cc55c;"></div>
<div class="a" style="left:1560.5px;top:2023.5px;width:4.4px;height:4.0px;background:#f5a443;"></div>
<div class="a" style="left:1569.2px;top:2023.5px;width:56.4px;height:4.0px;background:#5cc55c;"></div>
<div class="a" style="left:1629.7px;top:2023.5px;width:12.9px;height:4.0px;background:#f5a443;"></div>
<div class="a" style="left:1647.0px;top:2023.5px;width:12.7px;height:4.0px;background:#5cc55c;"></div>
<div class="a" style="left:1664.0px;top:2023.5px;width:13.2px;height:4.0px;background:#f5a443;"></div>
<div class="a" style="left:1681.0px;top:2023.5px;width:4.4px;height:4.0px;background:#5cc55c;"></div>
<div class="a" style="left:1689.7px;top:2023.5px;width:4.7px;height:4.0px;background:#f5a443;"></div>
<div class="a" style="left:1698.2px;top:2023.5px;width:4.6px;height:4.0px;background:#5cc55c;"></div>
<div class="a" style="left:1707.2px;top:2023.5px;width:4.3px;height:4.0px;background:#f5a443;"></div>
<div class="a" style="left:1715.6px;top:2023.5px;width:13.4px;height:4.0px;background:#5cc55c;"></div>
<div class="a" style="left:1732.8px;top:2023.5px;width:39.0px;height:4.0px;background:#f5a443;"></div>
<div class="a" style="left:1775.9px;top:2023.5px;width:30.5px;height:4.0px;background:#5cc55c;"></div>
<div class="a" style="left:1810.3px;top:2023.5px;width:7.7px;height:4.0px;background:#f5a443;"></div>
<div class="a" style="left:271.8px;top:2086px;width:1546px;height:3.5px;background:repeating-linear-gradient(90deg,#dadada 0 20px,transparent 20px 25.87px);"></div>
<div class="a" style="left:349.4px;top:2043.5px;width:20.1px;height:46.0px;background:#80aafc;"></div>
<div class="a" style="left:1281.5px;top:2084.4px;width:20.0px;height:5.1px;background:#80aafc;"></div>
<div class="a" style="left:1307.4px;top:2084.4px;width:20.0px;height:5.1px;background:#80aafc;"></div>
<div class="a" style="left:1333.2px;top:2084.4px;width:20.0px;height:5.1px;background:#80aafc;"></div>
<div class="a" style="left:1359.1px;top:2084.4px;width:20.0px;height:5.1px;background:#80aafc;"></div>
<div class="a" style="left:1385.0px;top:2084.4px;width:20.0px;height:5.1px;background:#80aafc;"></div>
<div class="a" style="left:1436.7px;top:2079.7px;width:20.0px;height:9.8px;background:#80aafc;"></div>
<div class="a" style="left:1462.6px;top:2084.4px;width:20.0px;height:5.1px;background:#80aafc;"></div>
<div class="a" style="left:1488.5px;top:2079.7px;width:20.0px;height:9.8px;background:#80aafc;"></div>
<div class="a" style="left:1514.3px;top:2079.7px;width:20.0px;height:9.8px;background:#80aafc;"></div>
<div class="a" style="left:1540.2px;top:2084.4px;width:20.0px;height:5.1px;background:#80aafc;"></div>
<div class="a" style="left:1566.1px;top:2084.4px;width:20.0px;height:5.1px;background:#80aafc;"></div>
<div class="a" style="left:1617.8px;top:2084.4px;width:20.0px;height:5.1px;background:#80aafc;"></div>
<div class="a" style="left:1643.7px;top:2079.7px;width:20.0px;height:9.8px;background:#80aafc;"></div>
<div class="a" style="left:1669.5px;top:2079.7px;width:20.0px;height:9.8px;background:#80aafc;"></div>
<div class="a" style="left:1695.4px;top:2074.9px;width:20.0px;height:14.6px;background:#80aafc;"></div>
<div class="a" style="left:1721.3px;top:2084.4px;width:20.0px;height:5.1px;background:#80aafc;"></div>
<div class="a" style="left:1773.0px;top:2084.4px;width:20.0px;height:5.1px;background:#80aafc;"></div>
<div class="a" style="left:1593.0px;top:1968.0px;width:109.0px;height:40.0px;background:#333333;border-radius:4px;"></div>
<div class="t" style="left:1606.0px;top:1968.0px;font-size:22.5px;line-height:40px;color:#ffffff;letter-spacing:-0.65px;">15:27:32</div>
<div class="a" style="left:1647.4px;top:2008.0px;width:2.0px;height:90.0px;background:#333333;"></div>
<svg class="a" style="left:1642px;top:2092px;" width="13" height="13" viewBox="0 0 13 13"><circle cx="6.5" cy="6.5" r="5.2" fill="#333"/></svg>
<div class="a" style="left:1946.0px;top:80.0px;width:800.0px;height:2036.0px;background:#f4f4f4;"></div>
<div class="a" style="left:1944.0px;top:80.0px;width:2.0px;height:2036.0px;background:#dcdcdc;"></div>
<svg class="a" style="left:1913px;top:1036px;" width="36" height="124" viewBox="0 0 36 124"><path d="M31.5 0 V2 Q3 5 2 32 L2 92 Q3 119 31.5 122 V124 H36 V0 Z" fill="#f4f4f4"/><path d="M31.5 0 V2 Q3 5 2 32 L2 92 Q3 119 31.5 122 V124" fill="none" stroke="#d9d9d9" stroke-width="2"/><path d="M14 53.5 L22 62 L14 70.5" fill="none" stroke="#333" stroke-width="3.2" stroke-linecap="butt" stroke-linejoin="miter"/></svg>
<div class="t" style="left:1978.8px;top:99.0px;font-size:26.5px;line-height:40px;color:#3c3c3c;letter-spacing:-0.32px;">Pinned items (0)</div>
<div class="t" style="left:2216.0px;top:99.0px;font-size:26.5px;line-height:40px;color:#1a8cff;letter-spacing:-0.39px;">Span details</div>
<svg class="a" style="left:2374px;top:110px;" width="20" height="20" viewBox="0 0 20 20"><path d="M3 3 L17 17 M17 3 L3 17" stroke="#1a8cff" stroke-width="2.2"/></svg>
<div class="a" style="left:1946.0px;top:156.0px;width:800.0px;height:2.0px;background:#d9d9d9;"></div>
<div class="a" style="left:2216.0px;top:154.0px;width:178.0px;height:4.0px;background:#1a8cff;"></div>
<div class="a" style="left:2737.0px;top:287.0px;width:6.0px;height:1463.0px;background:#7d8182;border-radius:3px;"></div>
<div class="a" style="left:1978px;top:196px;width:2px;height:59px;background:repeating-linear-gradient(180deg,#c8c8c8 0 4px,transparent 4px 7px);"></div>
<div class="a" style="left:2035px;top:196px;width:2px;height:59px;background:repeating-linear-gradient(180deg,#c8c8c8 0 4px,transparent 4px 7px);"></div>
<div class="a" style="left:1991.0px;top:214.0px;width:33.0px;height:5.0px;background:#b4b4b4;"></div>
<div class="a" style="left:1998.0px;top:223.5px;width:21.0px;height:5.0px;background:#8c8c8c;"></div>
<div class="a" style="left:2011.0px;top:232.0px;width:13.0px;height:5.5px;background:#b4b4b4;"></div>
<div class="t" style="left:2061.6px;top:186.0px;font-size:26.5px;line-height:40px;color:#262626;font-weight:700;letter-spacing:-0.28px;">checkoutservice</div>
<div class="t" style="left:2061.6px;top:225.0px;font-size:23.5px;line-height:40px;color:#8a8a8a;letter-spacing:-0.04px;">Today, 15:46:58</div>
<div class="t" style="left:1978.8px;top:300.5px;font-size:23.5px;line-height:40px;color:#8a8a8a;letter-spacing:-0.03px;">Duration</div>
<div class="t" style="left:2218.6px;top:300.5px;font-size:26.5px;line-height:40px;color:#3c3c3c;letter-spacing:-0.37px;">6.449ms</div>
<div class="a" style="left:1978.0px;top:372.0px;width:736.0px;height:2.0px;background:#d9d9d9;"></div>
<div class="t" style="left:1978.8px;top:406.5px;font-size:23.5px;line-height:40px;color:#8a8a8a;letter-spacing:0.18px;">Status</div>
<svg class="a" style="left:2212px;top:403px;" width="44" height="44" viewBox="0 0 44 44"><g transform="translate(22.199999999999818 22.5) scale(0.802)"><circle cx="0" cy="0" r="17.2" fill="none" stroke="#bdbdbd" stroke-width="3"/><path d="M-5.8 -4.2 Q-5.8 -10.2 0.2 -10.2 Q6.2 -10.2 6.2 -4.8 Q6.2 -1.5 2.5 0.5 Q0.2 1.8 0.2 4.8" fill="none" stroke="#bdbdbd" stroke-width="2.6"/><circle cx="0.2" cy="9.3" r="1.8" fill="#bdbdbd"/></g></svg>
<div class="t" style="left:2266.6px;top:405.0px;font-size:26.5px;line-height:40px;color:#3c3c3c;letter-spacing:-0.96px;">Unset</div>
<div class="t" style="left:1978.8px;top:463.0px;font-size:23.5px;line-height:40px;color:#8a8a8a;letter-spacing:0.10px;">Name</div>
<div class="t" style="left:2218.6px;top:463.0px;font-size:26.5px;line-height:40px;color:#3c3c3c;letter-spacing:-0.32px;">oteldemo.ShippingService/GetQuote</div>
<div class="t" style="left:1978.8px;top:518.3px;font-size:23.5px;line-height:40px;color:#8a8a8a;letter-spacing:0.38px;">Start time</div>
<div class="t" style="left:2218.6px;top:518.3px;font-size:26.5px;line-height:40px;color:#3c3c3c;letter-spacing:-0.46px;text-decoration:underline;text-underline-offset:1.5px;text-decoration-thickness:1.6px;">Today, 15:46:58.554</div>
<div class="t" style="left:1978.8px;top:574.4px;font-size:23.5px;line-height:40px;color:#8a8a8a;letter-spacing:-0.03px;">End time</div>
<div class="t" style="left:2218.6px;top:574.4px;font-size:26.5px;line-height:40px;color:#3c3c3c;letter-spacing:-0.46px;text-decoration:underline;text-underline-offset:1.5px;text-decoration-thickness:1.6px;">Today, 15:46:58.560</div>
<div class="t" style="left:1978.8px;top:630.9px;font-size:23.5px;line-height:40px;color:#8a8a8a;letter-spacing:-0.27px;">OTEL service</div>
<div class="t" style="left:2218.6px;top:630.9px;font-size:26.5px;line-height:40px;color:#3c3c3c;letter-spacing:-0.14px;">checkoutservice</div>
<div class="t" style="left:1978.8px;top:687.0px;font-size:23.5px;line-height:40px;color:#8a8a8a;letter-spacing:0.14px;">Components</div>
<div class="t" style="left:2218.6px;top:687.0px;font-size:26.5px;line-height:40px;color:#3c3c3c;letter-spacing:-0.17px;text-decoration:underline;text-underline-offset:1.5px;text-decoration-thickness:1.6px;">od-checkoutservice</div>
<div class="t" style="left:2444.0px;top:687.0px;font-size:26.5px;line-height:40px;color:#3c3c3c;letter-spacing:-0.17px;"> (deployment)</div>
<div class="t" style="left:2218.6px;top:734.2px;font-size:26.5px;line-height:40px;color:#3c3c3c;letter-spacing:-0.37px;text-decoration:underline;text-underline-offset:1.5px;text-decoration-thickness:1.6px;">gke-gke-demo-d...3bf643a8-i8ux</div>
<div class="t" style="left:2591.0px;top:734.2px;font-size:26.5px;line-height:40px;color:#3c3c3c;letter-spacing:-0.39px;"> (node)</div>
<div class="t" style="left:2218.6px;top:782.2px;font-size:26.5px;line-height:40px;color:#3c3c3c;letter-spacing:-0.24px;text-decoration:underline;text-underline-offset:1.5px;text-decoration-thickness:1.6px;">od-checkoutse...58d689d-g8r6h</div>
<div class="t" style="left:2586.0px;top:782.2px;font-size:26.5px;line-height:40px;color:#3c3c3c;letter-spacing:-0.25px;"> (pod)</div>
<div class="t" style="left:1978.8px;top:837.5px;font-size:23.5px;line-height:40px;color:#8a8a8a;letter-spacing:0.58px;">Attributes</div>
<svg class="a" style="left:2217px;top:852px;" width="16" height="12" viewBox="0 0 16 12"><path d="M2 2 L8.0 8 L14 2" fill="none" stroke="#333" stroke-width="2.6" stroke-linecap="round" stroke-linejoin="round"/></svg>
<div class="t" style="left:2246.0px;top:837.5px;font-size:26.5px;line-height:40px;color:#3c3c3c;letter-spacing:-1.48px;">30</div>
<div class="a" style="left:1978px;top:885px;width:2px;height:1231px;background:repeating-linear-gradient(180deg,#cfcfcf 0 6px,transparent 6px 11px);"></div>
<div class="a" style="left:0;top:0;width:2714px;height:2116px;overflow:hidden;">
<div class="a" style="left:2012.0px;top:902.0px;width:554.6px;height:44.0px;background:#e2e2e2;border-radius:22px;"></div>
<div class="t" style="left:2038.8px;top:904.0px;font-size:25px;line-height:40px;color:#3c3c3c;letter-spacing:-0.35px;">app.kubernetes.io/component:checkoutservice</div>
<div class="a" style="left:2012.0px;top:956.0px;width:376.4px;height:44.0px;background:#e2e2e2;border-radius:22px;"></div>
<div class="t" style="left:2038.8px;top:958.0px;font-size:25px;line-height:40px;color:#3c3c3c;letter-spacing:-0.39px;">app.kubernetes.io/instance:od</div>
<div class="a" style="left:2012.0px;top:1010.0px;width:526.6px;height:44.0px;background:#e2e2e2;border-radius:22px;"></div>
<div class="t" style="left:2038.8px;top:1012.0px;font-size:25px;line-height:40px;color:#3c3c3c;letter-spacing:-0.44px;">app.kubernetes.io/name:od-checkoutservice</div>
<div class="a" style="left:2012.0px;top:1064.0px;width:589.3px;height:44.0px;background:#e2e2e2;border-radius:22px;"></div>
<div class="t" style="left:2038.8px;top:1066.0px;font-size:25px;line-height:40px;color:#3c3c3c;letter-spacing:-0.53px;">host.name:od-checkoutservice-77458d689d-g8r6h</div>
<div class="a" style="left:2012.0px;top:1118.0px;width:578.6px;height:44.0px;background:#e2e2e2;border-radius:22px;"></div>
<div class="t" style="left:2038.8px;top:1120.0px;font-size:25px;line-height:40px;color:#3c3c3c;letter-spacing:-0.45px;">k8s.cluster.name:gke-demo-dev.gcp.stackstate.io</div>
<div class="a" style="left:2012.0px;top:1172.0px;width:501.9px;height:44.0px;background:#e2e2e2;border-radius:22px;"></div>
<div class="t" style="left:2038.8px;top:1174.0px;font-size:25px;line-height:40px;color:#3c3c3c;letter-spacing:-0.51px;">k8s.deployment.name:od-checkoutservice</div>
<div class="a" style="left:2012.0px;top:1226.0px;width:400.4px;height:44.0px;background:#e2e2e2;border-radius:22px;"></div>
<div class="t" style="left:2038.8px;top:1228.0px;font-size:25px;line-height:40px;color:#3c3c3c;letter-spacing:-0.60px;">k8s.namespace.name:otel-demo</div>
<div class="a" style="left:2012.0px;top:1280.0px;width:701.5px;height:44.0px;background:#e2e2e2;border-radius:22px;"></div>
<div class="t" style="left:2038.8px;top:1282.0px;font-size:25px;line-height:40px;color:#3c3c3c;letter-spacing:-0.62px;">k8s.node.name:gke-gke-demo-d...ault-node-pool-3bf643a8-i8ux</div>
<div class="a" style="left:2012.0px;top:1334.0px;width:281.5px;height:44.0px;background:#e2e2e2;border-radius:22px;"></div>
<div class="t" style="left:2038.8px;top:1336.0px;font-size:25px;line-height:40px;color:#3c3c3c;letter-spacing:-0.57px;">k8s.pod.ip:10.1.2.154</div>
<div class="a" style="left:2012.0px;top:1388.0px;width:627.3px;height:44.0px;background:#e2e2e2;border-radius:22px;"></div>
<div class="t" style="left:2038.8px;top:1390.0px;font-size:25px;line-height:40px;color:#3c3c3c;letter-spacing:-0.54px;">k8s.pod.name:od-checkoutservice-77458d689d-g8r6h</div>
<div class="a" style="left:2012.0px;top:1442.0px;width:499.3px;height:44.0px;background:#e2e2e2;border-radius:22px;"></div>
<div class="t" style="left:2038.8px;top:1444.0px;font-size:25px;line-height:40px;color:#3c3c3c;letter-spacing:-0.52px;">k8s.pod.start_time:2024-03-12T11:57:42Z</div>
<div class="a" style="left:2012.0px;top:1496.0px;width:623.7px;height:44.0px;background:#e2e2e2;border-radius:22px;"></div>
<div class="t" style="left:2038.8px;top:1498.0px;font-size:25px;line-height:40px;color:#3c3c3c;letter-spacing:-0.53px;">k8s.pod.uid:3a430351-2cda-4d67-8d88-318fee72cfce</div>
<div class="a" style="left:2012.0px;top:1550.0px;width:513.4px;height:44.0px;background:#e2e2e2;border-radius:22px;"></div>
<div class="t" style="left:2038.8px;top:1552.0px;font-size:25px;line-height:40px;color:#3c3c3c;letter-spacing:-0.39px;">opentelemetry.io/name:od-checkoutservice</div>
<div class="a" style="left:2012.0px;top:1604.0px;width:701.5px;height:44.0px;background:#e2e2e2;border-radius:22px;"></div>
<div class="t" style="left:2038.8px;top:1606.0px;font-size:25px;line-height:40px;color:#3c3c3c;letter-spacing:-0.61px;">os.description:Alpine Linux 3....t 18 03:16:55 UTC 2023 x86_64)</div>
<div class="a" style="left:2012.0px;top:1658.0px;width:185.2px;height:44.0px;background:#e2e2e2;border-radius:22px;"></div>
<div class="t" style="left:2038.8px;top:1660.0px;font-size:25px;line-height:40px;color:#3c3c3c;letter-spacing:-0.63px;">os.type:linux</div>
<div class="a" style="left:2012.0px;top:1712.0px;width:392.6px;height:44.0px;background:#e2e2e2;border-radius:22px;"></div>
<div class="t" style="left:2038.8px;top:1714.0px;font-size:25px;line-height:40px;color:#3c3c3c;letter-spacing:-0.58px;">pod-template-hash:77458d689d</div>
<div class="a" style="left:2012.0px;top:1766.0px;width:533.3px;height:44.0px;background:#e2e2e2;border-radius:22px;"></div>
<div class="t" style="left:2038.8px;top:1768.0px;font-size:25px;line-height:40px;color:#3c3c3c;letter-spacing:-0.46px;">process.command_args:[&quot;./checkoutservice&quot;]</div>
<div class="a" style="left:2012.0px;top:1820.0px;width:505.6px;height:44.0px;background:#e2e2e2;border-radius:22px;"></div>
<div class="t" style="left:2038.8px;top:1822.0px;font-size:25px;line-height:40px;color:#3c3c3c;letter-spacing:-0.51px;">process.executable.name:checkoutservice</div>
<div class="a" style="left:2012.0px;top:1874.0px;width:639.3px;height:44.0px;background:#e2e2e2;border-radius:22px;"></div>
<div class="t" style="left:2038.8px;top:1876.0px;font-size:25px;line-height:40px;color:#3c3c3c;letter-spacing:-0.18px;">process.executable.path:/usr/src/app/checkoutservice</div>
<div class="a" style="left:2012.0px;top:1928.0px;width:293.2px;height:44.0px;background:#e2e2e2;border-radius:22px;"></div>
<div class="t" style="left:2038.8px;top:1930.0px;font-size:25px;line-height:40px;color:#3c3c3c;letter-spacing:-0.64px;">process.owner:nobody</div>
<div class="a" style="left:2012.0px;top:1982.0px;width:195.4px;height:44.0px;background:#e2e2e2;border-radius:22px;"></div>
<div class="t" style="left:2038.8px;top:1984.0px;font-size:25px;line-height:40px;color:#3c3c3c;letter-spacing:-0.59px;">process.pid:1</div>
<div class="a" style="left:2012.0px;top:2036.0px;width:701.5px;height:44.0px;background:#e2e2e2;border-radius:22px;"></div>
<div class="t" style="left:2038.8px;top:2038.0px;font-size:25px;line-height:40px;color:#3c3c3c;letter-spacing:-0.34px;">process.runtime.description:go version go1.22.0 linux/amd64</div>
<div class="a" style="left:2012.0px;top:2090.0px;width:324.4px;height:44.0px;background:#e2e2e2;border-radius:22px;"></div>
<div class="t" style="left:2038.8px;top:2092.0px;font-size:25px;line-height:40px;color:#3c3c3c;letter-spacing:-0.52px;">process.runtime.name:go</div>
</div>
</body></html>
